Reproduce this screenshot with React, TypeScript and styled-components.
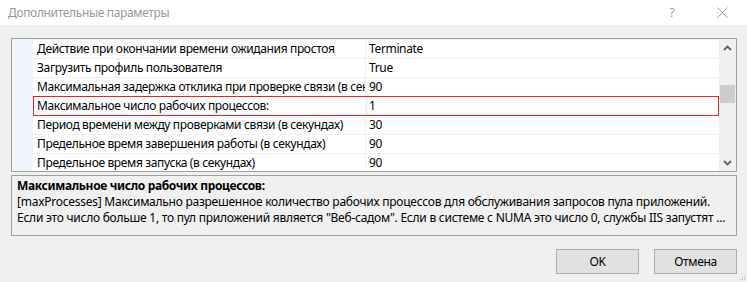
import React from "react";
import styled, { createGlobalStyle } from "styled-components";

const Global = createGlobalStyle`
  html, body { margin: 0; padding: 0; }
  body {
    background: #f0f0f0;
    font-family: "Noto Sans", "Open Sans", sans-serif;
    font-size: 12px;
    letter-spacing: -0.35px;
    color: #000;
  }
`;

const Window = styled.div`
  position: relative;
  width: 747px;
  height: 282px;
  background: #f0f0f0;
  display: flex;
  flex-direction: column;
  overflow: hidden;
`;

const TitleBar = styled.div`
  height: 25px;
  background: #ffffff;
  display: flex;
  align-items: center;
  padding-left: 8px;
  color: #9a9a9a;
  font-size: 12px;
`;

const TitleText = styled.div`
  flex: 1;
`;

const TitleButton = styled.div`
  width: 50px;
  display: flex;
  justify-content: center;
  align-items: center;
  color: #9a9a9a;
`;

const Body = styled.div`
  display: flex;
  flex-direction: column;
  padding: 13px 10px 0 11px;
`;

const GridPanel = styled.div`
  height: 134px;
  border: 1px solid #a0a0a0;
  box-sizing: border-box;
  background: #ffffff;
  display: flex;
`;

const Margin = styled.div`
  width: 21px;
  background: #f0f4fb;
`;

const Rows = styled.div`
  flex: 1;
  overflow: hidden;
  display: flex;
  flex-direction: column;
`;

const Row = styled.div<{ $selected?: boolean }>`
  flex: none;
  height: 19px;
  box-sizing: border-box;
  display: flex;
  border-top: 1px solid #f0f0f0;
  position: relative;
  ${(p) =>
    p.$selected &&
    `
    border: 1px solid #e2242c;
    height: 20px;
    margin-bottom: -1px;
    z-index: 1;
  `}
`;

const NameCell = styled.div<{ $selected?: boolean }>`
  width: ${(p) => (p.$selected ? 332 : 333)}px;
  flex: none;
  box-sizing: border-box;
  padding-left: ${(p) => (p.$selected ? 3 : 4)}px;
  border-right: 1px solid #f0f0f0;
  white-space: nowrap;
  overflow: hidden;
  line-height: 18px;
`;

const ValueCell = styled.div<{ $selected?: boolean }>`
  flex: 1;
  padding-left: 3px;
  white-space: nowrap;
  line-height: 18px;
  ${(p) => p.$selected && `border-left: 2px solid #eef4fb; padding-left: 1px;`}
`;

const ScrollBar = styled.div`
  width: 17px;
  background: #f0f0f0;
  display: flex;
  flex-direction: column;
`;

const ScrollArrow = styled.div`
  height: 17px;
  display: flex;
  align-items: center;
  justify-content: center;
`;

const Track = styled.div`
  flex: 1;
  display: flex;
  flex-direction: column;
  align-items: center;
`;

const Thumb = styled.div`
  margin-top: 29px;
  width: 15px;
  height: 18px;
  background: #cdcdcd;
`;

const DescPanel = styled.div`
  margin-top: 3px;
  height: 61px;
  box-sizing: border-box;
  border: 1px solid #a0a0a0;
  padding: 2px 5px 0 5px;
  line-height: 16px;
  overflow: hidden;
`;

const DescTitle = styled.div`
  font-weight: bold;
  white-space: nowrap;
`;

const DescLine = styled.div`
  white-space: nowrap;
  letter-spacing: -0.25px;
`;

const ButtonRow = styled.div`
  display: flex;
  justify-content: flex-end;
  gap: 15px;
  padding: 13px 10px 0 0;
`;

const Button = styled.div`
  width: 83px;
  height: 25px;
  box-sizing: border-box;
  background: #e1e1e1;
  border: 1px solid #adadad;
  display: flex;
  align-items: center;
  justify-content: center;
  font-size: 12px;
`;

const Grip = styled.svg`
  position: absolute;
  right: 1px;
  bottom: 1px;
`;

const rows: [string, string][] = [
  ["Действие при окончании времени ожидания простоя", "Terminate"],
  ["Загрузить профиль пользователя", "True"],
  ["Максимальная задержка отклика при проверке связи (в секундах)", "90"],
  ["Максимальное число рабочих процессов:", "1"],
  ["Период времени между проверками связи (в секундах)", "30"],
  ["Предельное время завершения работы (в секундах)", "90"],
  ["Предельное время запуска (в секундах)", "90"],
];

const Chevron = ({ up }: { up?: boolean }) => (
  <svg width="9" height="6" viewBox="0 0 9 6">
    <polyline
      points={up ? "1,5 4.5,1.5 8,5" : "1,1 4.5,4.5 8,1"}
      fill="none"
      stroke="#606060"
      strokeWidth="1.8"
    />
  </svg>
);

export default function App() {
  return (
    <Window>
      <Global />
      <TitleBar>
        <TitleText>Дополнительные параметры</TitleText>
        <TitleButton>?</TitleButton>
        <TitleButton>
          <svg width="11" height="11" viewBox="0 0 11 11">
            <path d="M0.5 0.5 L10.5 10.5 M10.5 0.5 L0.5 10.5" stroke="#9a9a9a" strokeWidth="1" />
          </svg>
        </TitleButton>
      </TitleBar>
      <Body>
        <GridPanel>
          <Margin />
          <Rows>
            {rows.map(([n, v], i) => (
              <Row key={i} $selected={i === 3}>
                <NameCell $selected={i === 3}>{n}</NameCell>
                <ValueCell $selected={i === 3}>{v}</ValueCell>
              </Row>
            ))}
          </Rows>
          <ScrollBar>
            <ScrollArrow>
              <Chevron up />
            </ScrollArrow>
            <Track>
              <Thumb />
            </Track>
            <ScrollArrow>
              <Chevron />
            </ScrollArrow>
          </ScrollBar>
        </GridPanel>
        <DescPanel>
          <DescTitle>Максимальное число рабочих процессов:</DescTitle>
          <DescLine>
            [maxProcesses] Максимально разрешенное количество рабочих процессов для обслуживания запросов пула приложений.
          </DescLine>
          <DescLine>
            Если это число больше 1, то пул приложений является "Веб-садом". Если в системе с NUMA это число 0, службы IIS запустят ...
          </DescLine>
        </DescPanel>
      </Body>
      <ButtonRow>
        <Button>OK</Button>
        <Button>Отмена</Button>
      </ButtonRow>
      <Grip width="7" height="7" viewBox="0 0 7 7">
        <rect x="5" y="1" width="1" height="1" fill="#b8b8b8" />
        <rect x="3" y="3" width="1" height="1" fill="#b8b8b8" />
        <rect x="5" y="3" width="1" height="1" fill="#b8b8b8" />
        <rect x="1" y="5" width="1" height="1" fill="#b8b8b8" />
        <rect x="3" y="5" width="1" height="1" fill="#b8b8b8" />
        <rect x="5" y="5" width="1" height="1" fill="#b8b8b8" />
      </Grip>
    </Window>
  );
}
